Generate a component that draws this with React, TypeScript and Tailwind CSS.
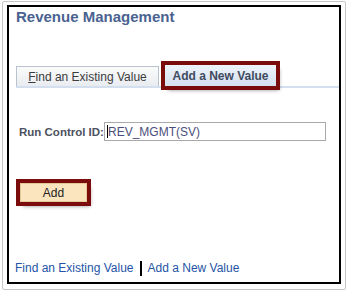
const font = { fontFamily: '"Liberation Sans", Arial, sans-serif' };

function TabRow() {
  return (
    <div className="mt-[39px] ml-[7px]">
      <div className="flex items-end gap-[6px]">
        <div className="h-[20px] w-[143px] border border-b-0 border-[#b9c3cf] bg-gradient-to-b from-[#fbfbfb] to-[#e9ecf0] flex items-center justify-center text-[12px] leading-[14px] text-[#3c3c3c]">
          <span>
            <span className="underline">F</span>ind an Existing Value
          </span>
        </div>
        <div className="h-[21px] w-[111px] bg-gradient-to-b from-[#eef3fa] to-[#d5e1ef] outline-4 outline-[#7b0c0c] shadow-[3px_4px_4px_rgba(0,0,0,0.45)] flex items-center justify-center text-[12px] leading-[14px] font-bold text-[#3e4b60]">
          Add a New Value
        </div>
      </div>
      <div className="h-[2px] bg-[#d3dfee]" />
    </div>
  );
}

export default function App() {
  return (
    <div className="w-[347px] h-[292px] bg-white pt-[1px] pl-[2px]" style={font}>
      <div className="w-[344px] h-[289px] border border-[#c6c6c6] rounded-[2px] pt-[3px] pl-[4px]">
        <div className="w-[334px] h-[279px] border-2 border-black flex flex-col">
          <h1 className="mt-[1px] ml-[7px] text-[15px] leading-[18px] font-bold text-[#4a6290]">
            Revenue Management
          </h1>
          <TabRow />
          <div className="mt-[34px] ml-[10px] flex items-center h-[19px]">
            <span className="shrink-0 whitespace-nowrap text-[11.5px] leading-[14px] font-bold text-[#4d5160] w-[85px]">
              Run Control ID:
            </span>
            <div className="shrink-0 h-[19px] w-[222px] border border-[#a9a9a9] flex items-center pl-[2px] text-[12px] leading-[14px] text-[#4b4e7c] whitespace-nowrap">
              <span className="w-px h-[13px] bg-black" />
              REV_MGMT(SV)
            </div>
          </div>
          <div className="mt-[42px] ml-[11px] flex">
            <button className="h-[19px] w-[67px] bg-[#fbe5bf] border border-[#e6c999] text-[12px] leading-[14px] text-[#222] outline-4 outline-[#7b0c0c] shadow-[3px_4px_4px_rgba(0,0,0,0.45)]">
              Add
            </button>
          </div>
          <div className="mt-[58px] ml-[6px] flex items-center h-[16px] text-[12px] leading-[16px] text-[#2554a6] whitespace-nowrap">
            <span>Find an Existing Value</span>
            <span className="mx-[6px] w-[2px] h-[15px] bg-black" />
            <span>Add a New Value</span>
          </div>
        </div>
      </div>
    </div>
  );
}
